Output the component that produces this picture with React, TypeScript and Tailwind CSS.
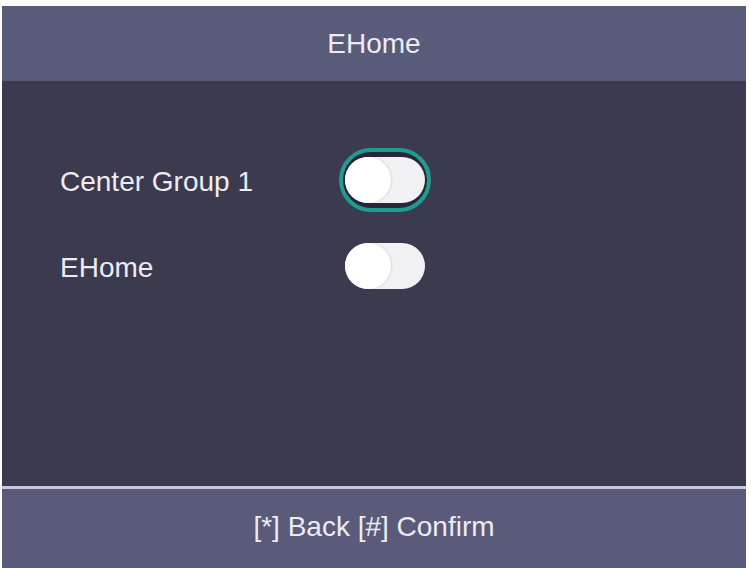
import React from "react";

type ToggleProps = { focused?: boolean };

function Toggle({ focused }: ToggleProps) {
  const pill = (
    <div className="relative h-[46px] w-[80px] rounded-full bg-[#f1f1f4]">
      <div className="absolute left-0 top-0 h-[46px] w-[46px] rounded-full bg-white shadow-[1px_0_2px_rgba(0,0,0,0.1)]" />
    </div>
  );
  if (!focused) return <div className="flex h-[64px] w-[92px] items-center justify-center">{pill}</div>;
  return (
    <div className="flex h-[64px] w-[92px] items-center justify-center rounded-full border-[4px] border-[#1f9c90] bg-[#28273a]">
      {pill}
    </div>
  );
}

export default function App() {
  return (
    <div
      className="flex h-[568px] w-[751px] flex-col bg-white pl-[2px] pr-[5px] pt-[6px] text-[28px] text-[#ecebf2]"
      style={{ fontFamily: '"Liberation Sans", Arial, sans-serif' }}
    >
      <header className="flex h-[75px] items-center justify-center bg-[#585b79]">EHome</header>
      <main className="flex flex-1 flex-col gap-[22px] bg-[#3b3a4f] pl-[58px] pt-[67px]">
        <div className="flex h-[64px] items-center">
          <span className="w-[279px] pt-[4px]">Center Group 1</span>
          <Toggle focused />
        </div>
        <div className="flex h-[64px] items-center">
          <span className="w-[279px] pt-[4px]">EHome</span>
          <Toggle />
        </div>
      </main>
      <div className="h-[3px] bg-[#c9cad8]" />
      <footer className="flex h-[79px] items-center justify-center bg-[#5a5b7a] pb-[4px]">
        [*] Back [#] Confirm
      </footer>
    </div>
  );
}
